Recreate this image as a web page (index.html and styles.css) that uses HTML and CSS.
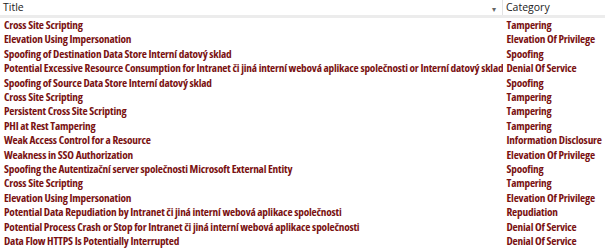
FILE: index.html
```html
<!DOCTYPE html>
<html lang="en">
<head>
  <meta charset="UTF-8">
  <title>Threat List</title>
  <link rel="stylesheet" href="styles.css">
</head>
<body>
  <table class="threats">
    <thead>
      <tr>
        <th class="col-title">Title <span class="sort">&#9662;</span></th>
        <th class="col-cat">Category</th>
      </tr>
    </thead>
    <tbody>
      <tr><td>Cross Site Scripting</td><td>Tampering</td></tr>
      <tr><td>Elevation Using Impersonation</td><td>Elevation Of Privilege</td></tr>
      <tr><td>Spoofing of Destination Data Store Interní datový sklad</td><td>Spoofing</td></tr>
      <tr><td>Potential Excessive Resource Consumption for Intranet či jiná interní webová aplikace společnosti or Interní datový sklad</td><td>Denial Of Service</td></tr>
      <tr><td>Spoofing of Source Data Store Interní datový sklad</td><td>Spoofing</td></tr>
      <tr><td>Cross Site Scripting</td><td>Tampering</td></tr>
      <tr><td>Persistent Cross Site Scripting</td><td>Tampering</td></tr>
      <tr><td>PHI at Rest Tampering</td><td>Tampering</td></tr>
      <tr><td>Weak Access Control for a Resource</td><td>Information Disclosure</td></tr>
      <tr><td>Weakness in SSO Authorization</td><td>Elevation Of Privilege</td></tr>
      <tr><td>Spoofing the Autentizační server společnosti Microsoft External Entity</td><td>Spoofing</td></tr>
      <tr><td>Cross Site Scripting</td><td>Tampering</td></tr>
      <tr><td>Elevation Using Impersonation</td><td>Elevation Of Privilege</td></tr>
      <tr><td>Potential Data Repudiation by Intranet či jiná interní webová aplikace společnosti</td><td>Repudiation</td></tr>
      <tr><td>Potential Process Crash or Stop for Intranet či jiná interní webová aplikace společnosti</td><td>Denial Of Service</td></tr>
      <tr><td>Data Flow HTTPS Is Potentially Interrupted</td><td>Denial Of Service</td></tr>
    </tbody>
  </table>
</body>
</html>
```

FILE: styles.css
```css
body { margin: 0; background: #fff; font-family: "Open Sans", sans-serif; }
.threats { width: 605px; border-collapse: collapse; table-layout: fixed; }
.threats th { font-weight: normal; font-size: 10.5px; color: #222; text-align: left; height: 14px; line-height: 15px; padding: 0 0 0 3px; border-bottom: 3px solid #ececec; white-space: nowrap; }
.threats .col-title { width: 499px; position: relative; }
.threats .col-cat { border-left: 1px solid #e3e3e3; }
.sort { position: absolute; right: 6px; top: 1px; font-size: 8px; color: #666; }
.threats td { font-size: 11.3px; font-stretch: 78%; letter-spacing: -0.2px; font-weight: bold; color: #7a1212; height: 14.4px; padding: 0 0 0 4px; white-space: nowrap; overflow: hidden; line-height: 14.4px; }
.threats tbody tr:last-child td { height: 13px; }
```
